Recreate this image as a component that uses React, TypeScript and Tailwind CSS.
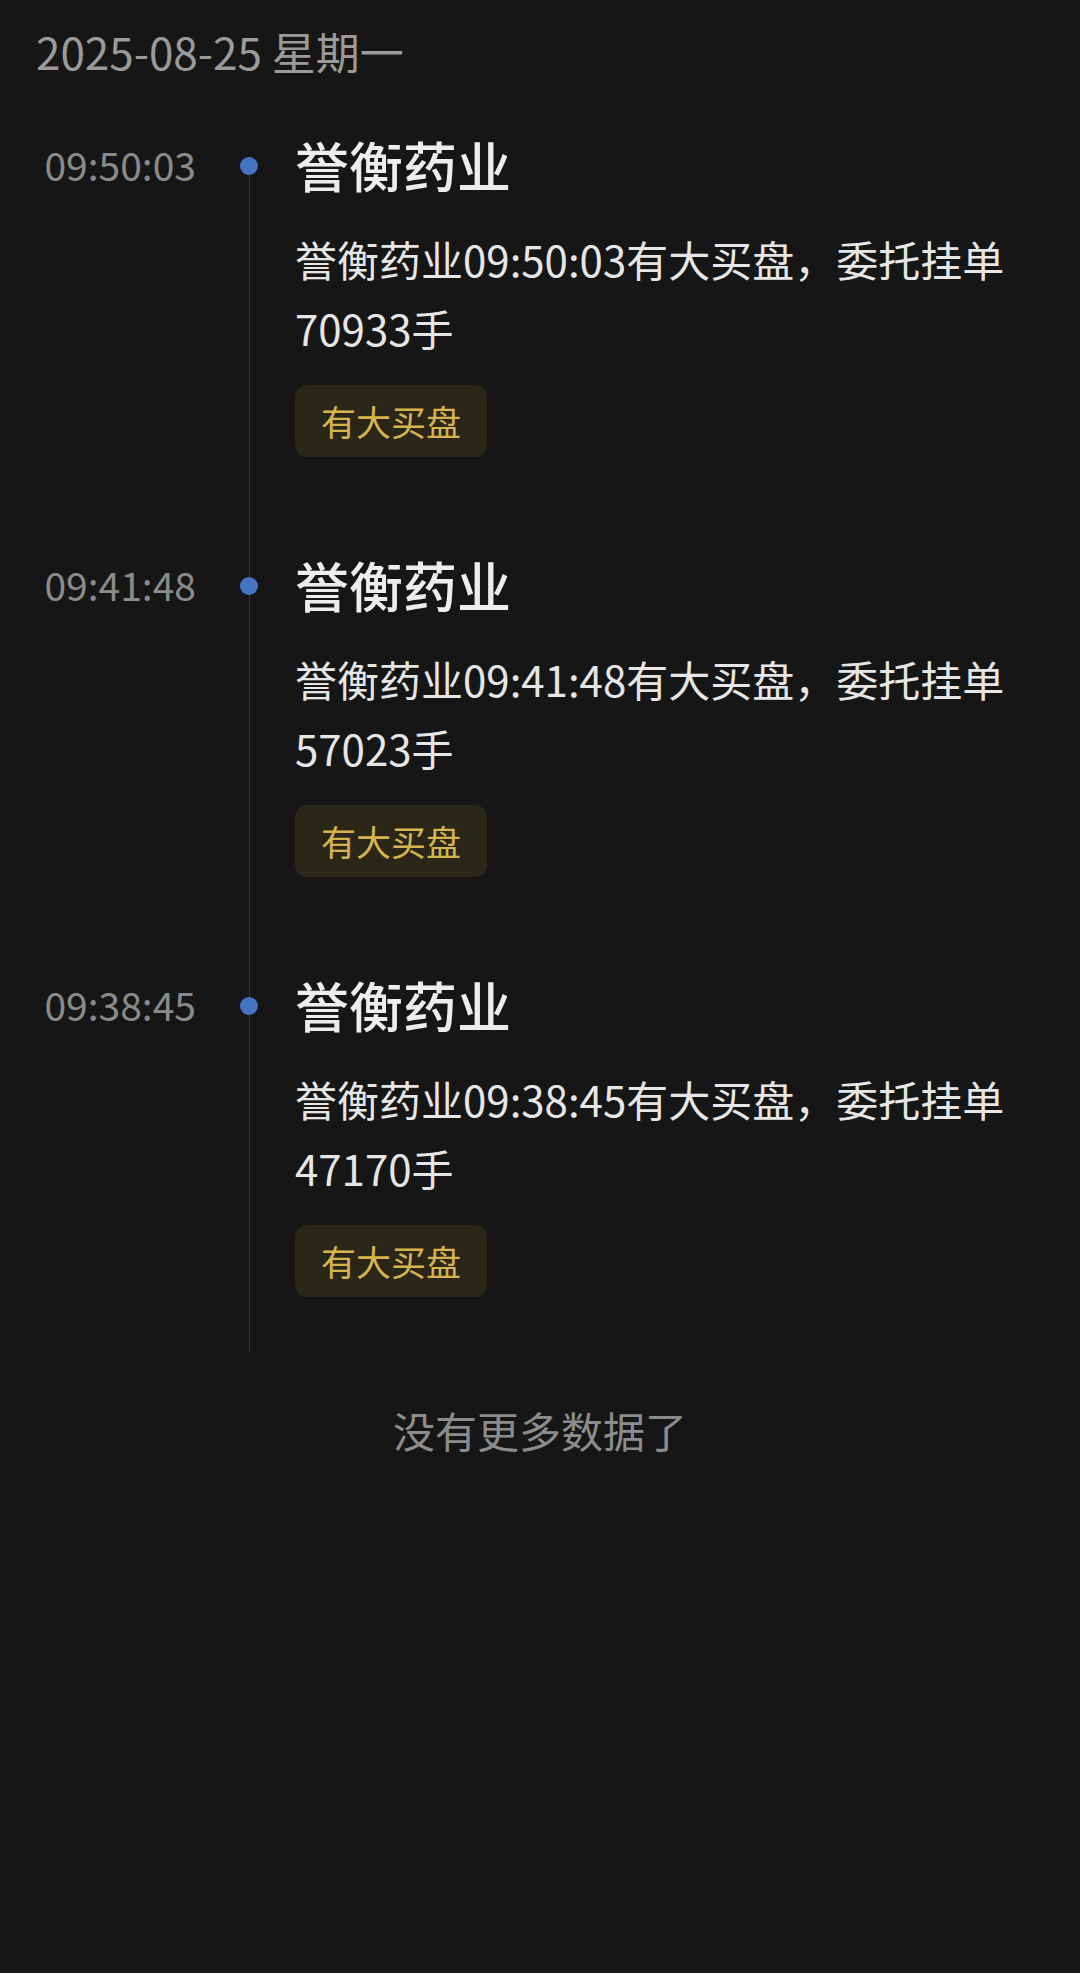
const records = [
  { time: '09:50:03', name: '誉衡药业', volume: '70933', tag: '有大买盘' },
  { time: '09:41:48', name: '誉衡药业', volume: '57023', tag: '有大买盘' },
  { time: '09:38:45', name: '誉衡药业', volume: '47170', tag: '有大买盘' },
];

export default function App() {
  return (
    <div className="min-h-screen w-full bg-[#161616] font-['Noto_Sans_CJK_SC','Noto_Sans',sans-serif] px-[36px] pt-[21px]">
      <div className="text-[44px] leading-[60px] text-[#9a9a9a]">2025-08-25 星期一</div>

      <div className="mt-[48px]">
        {records.map((r, i) => {
          const last = i === records.length - 1;
          return (
            <div key={r.time} className="flex">
              <div className="w-[160px] shrink-0 pb-[3px] text-right text-[39px] leading-[71px] text-[#8a8a8a]">{r.time}</div>

              <div className="ml-[35px] flex w-[36px] shrink-0 flex-col items-center">
                <div className={i === 0 ? 'h-[28px] w-px' : 'h-[28px] w-px bg-[#383838]'} />
                <div className="h-[18px] w-[18px] rounded-full bg-[#4573c4]" />
                <div className="w-px flex-1 bg-[#383838]" />
              </div>

              <div className={last ? 'ml-[28px] flex-1 pb-[54px]' : 'ml-[28px] flex-1 pb-[92px]'}>
                <div className="pb-[3px] text-[54px] font-medium leading-[71px] text-[#ededed]">{r.name}</div>
                <div className="mt-[21px] pb-[2px] text-[42px] leading-[69px] text-[#e6e6e6]">
                  {r.name}
                  {r.time}有大买盘，委托挂单{r.volume}手
                </div>
                <div className="mt-[21px] inline-flex h-[72px] items-center rounded-[12px] bg-[#2a2618] px-[26px] text-[35px] text-[#d5b44f]">
                  {r.tag}
                </div>
              </div>
            </div>
          );
        })}
      </div>

      <div className="mt-[49px] text-center text-[42px] leading-[60px] text-[#8c8c8c]">没有更多数据了</div>
    </div>
  );
}
